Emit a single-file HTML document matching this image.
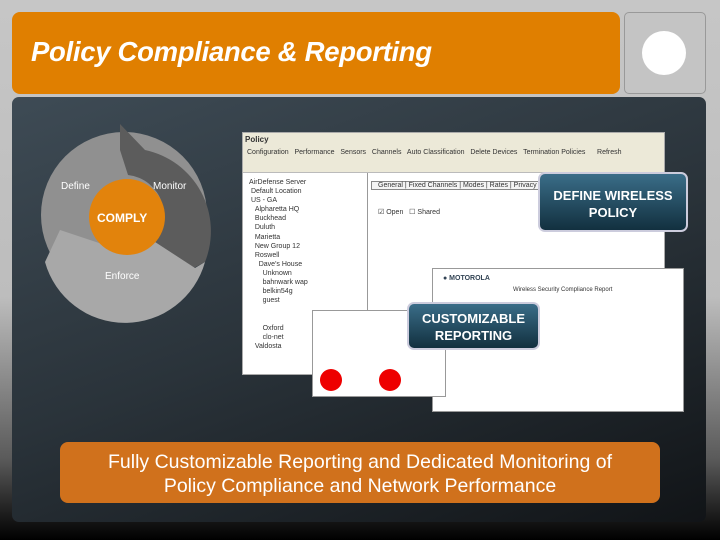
<!DOCTYPE html>
<html><head><style>
*{margin:0;padding:0;box-sizing:border-box}
body{width:720px;height:540px;overflow:hidden;position:relative;font-family:"Liberation Sans",sans-serif;background:linear-gradient(#c6c6c6 0%,#bdbdbd 55%,#5a5a5a 85%,#000 100%)}
.title{position:absolute;left:12px;top:12px;width:608px;height:82px;background:#e07f00;border-radius:8px}
.title span{position:absolute;left:19px;top:24px;font-size:27.5px;font-weight:bold;font-style:italic;color:#fff;letter-spacing:-0.3px}
.logo{position:absolute;left:624px;top:12px;width:82px;height:82px;background:#c4c4c4;border:1px solid #999;border-radius:5px}
.logo div{position:absolute;left:17px;top:18px;width:44px;height:44px;background:#fff;border-radius:50%}
.panel{position:absolute;left:12px;top:97px;width:694px;height:425px;border-radius:7px;background:linear-gradient(160deg,#3e4b55 0%,#2a333a 50%,#111417 100%)}
.shot{position:absolute;left:242px;top:132px;width:423px;height:243px;background:#fff;border:1px solid #aaa}
.callout{position:absolute;border:2px solid #ccd;border-radius:7px;background:linear-gradient(#3a6d88,#12303f);color:#fff;font-weight:bold;text-align:center}
.bottom{position:absolute;left:60px;top:442px;width:600px;height:61px;background:#d0711c;border-radius:8px;color:#fff;font-size:19.5px;text-align:center;line-height:24px;padding-top:8px}
.t{position:absolute;font-size:7px;color:#333;white-space:nowrap}
</style></head><body>
<div class="title"><span>Policy Compliance &amp; Reporting</span></div>
<div class="logo"><div></div></div>
<div class="panel"></div>
<svg style="position:absolute;left:0;top:0" width="720" height="540">
<circle cx="124" cy="215" r="83" fill="#909090"/>
<path d="M120 124 L145 150 A83 83 0 0 1 205 262 L190 270 L150 245 A40 40 0 0 0 128 175 L120 150 Z" fill="#5c5c5c"/>
<path d="M205 262 A83 83 0 0 1 45 262 L60 230 L120 250 A40 40 0 0 0 152 240 L195 268Z" fill="#a8a8a8"/>
<circle cx="127" cy="217" r="38" fill="#e2830c"/>
<text x="61" y="189" fill="#fff" font-size="10" font-family="Liberation Sans">Define</text>
<text x="153" y="189" fill="#fff" font-size="10" font-family="Liberation Sans">Monitor</text>
<text x="97" y="222" fill="#fff" font-size="12" font-weight="bold" font-family="Liberation Sans">COMPLY</text>
<text x="105" y="279" fill="#fff" font-size="10" font-family="Liberation Sans">Enforce</text>
</svg>
<div class="shot">
<div style="height:40px;background:#ece9d8;border-bottom:1px solid #bbb"></div>
<div class="t" style="left:2px;top:2px;font-weight:bold;font-size:8px">Policy</div>
<div class="t" style="left:4px;top:16px">Configuration &nbsp; Performance &nbsp; Sensors &nbsp; Channels &nbsp; Auto Classification &nbsp; Delete Devices &nbsp; Termination Policies &nbsp;&nbsp;&nbsp;&nbsp; Refresh</div>
<div style="position:absolute;left:0;top:40px;width:125px;height:203px;border-right:1px solid #999"></div>
<div class="t" style="left:6px;top:45px;line-height:9.1px">AirDefense Server<br>&nbsp;Default Location<br>&nbsp;US - GA<br>&nbsp;&nbsp;&nbsp;Alpharetta HQ<br>&nbsp;&nbsp;&nbsp;Buckhead<br>&nbsp;&nbsp;&nbsp;Duluth<br>&nbsp;&nbsp;&nbsp;Marietta<br>&nbsp;&nbsp;&nbsp;New Group 12<br>&nbsp;&nbsp;&nbsp;Roswell<br>&nbsp;&nbsp;&nbsp;&nbsp;&nbsp;Dave's House<br>&nbsp;&nbsp;&nbsp;&nbsp;&nbsp;&nbsp;&nbsp;Unknown<br>&nbsp;&nbsp;&nbsp;&nbsp;&nbsp;&nbsp;&nbsp;bahnwark wap<br>&nbsp;&nbsp;&nbsp;&nbsp;&nbsp;&nbsp;&nbsp;belkin54g<br>&nbsp;&nbsp;&nbsp;&nbsp;&nbsp;&nbsp;&nbsp;guest<br><br><br>&nbsp;&nbsp;&nbsp;&nbsp;&nbsp;&nbsp;&nbsp;Oxford<br>&nbsp;&nbsp;&nbsp;&nbsp;&nbsp;&nbsp;&nbsp;clo-net<br>&nbsp;&nbsp;&nbsp;Valdosta</div>
<div class="t" style="left:128px;top:48px;background:#f4f4f4;border:1px solid #888;padding:0 6px">General | Fixed Channels | Modes | Rates | Privacy | Other</div>
<div class="t" style="left:135px;top:75px">&#9745; Open &nbsp; &#9744; Shared</div>
</div>
<div style="position:absolute;left:432px;top:268px;width:252px;height:144px;background:#fff;border:1px solid #999">
<div class="t" style="left:10px;top:6px;font-weight:bold;color:#345">&#9679; MOTOROLA</div>
<div class="t" style="left:80px;top:18px;font-size:6px">Wireless Security Compliance Report</div>
</div>
<div style="position:absolute;left:312px;top:310px;width:134px;height:87px;background:#fff;border:1px solid #999">
<div style="position:absolute;left:7px;top:58px;width:22px;height:22px;border-radius:50%;background:#e00"></div>
<div style="position:absolute;left:66px;top:58px;width:22px;height:22px;border-radius:50%;background:#e00"></div>
</div>
<div class="callout" style="left:538px;top:172px;width:150px;height:60px;font-size:13px;line-height:17px;padding-top:13px">DEFINE WIRELESS<br>POLICY</div>
<div class="callout" style="left:407px;top:302px;width:133px;height:48px;font-size:13px;line-height:17px;padding-top:6px">CUSTOMIZABLE<br>REPORTING</div>
<div class="bottom">Fully Customizable Reporting and Dedicated Monitoring of<br>Policy Compliance and Network Performance</div>
</body></html>
